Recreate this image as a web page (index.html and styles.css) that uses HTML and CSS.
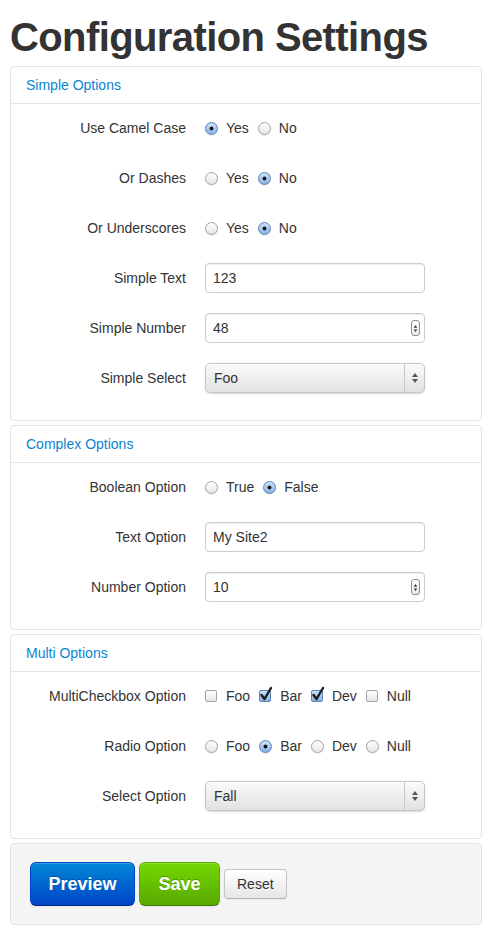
FILE: index.html
```html
<!DOCTYPE html>
<html>
<head>
<meta charset="utf-8">
<link rel="stylesheet" href="styles.css">
</head>
<body>
<h1 class="title">Configuration Settings</h1>

<section class="panel">
  <div class="panel-head">Simple Options</div>
  <div class="panel-body">
    <div class="row"><div class="lbl">Use Camel Case</div><div class="ctl"><label class="opt"><span class="radio on"></span>Yes</label><label class="opt"><span class="radio"></span>No</label></div></div>
    <div class="row"><div class="lbl">Or Dashes</div><div class="ctl"><label class="opt"><span class="radio"></span>Yes</label><label class="opt"><span class="radio on"></span>No</label></div></div>
    <div class="row"><div class="lbl">Or Underscores</div><div class="ctl"><label class="opt"><span class="radio"></span>Yes</label><label class="opt"><span class="radio on"></span>No</label></div></div>
    <div class="row"><div class="lbl">Simple Text</div><div class="ctl"><div class="field"><input class="input" type="text" value="123"></div></div></div>
    <div class="row"><div class="lbl">Simple Number</div><div class="ctl"><div class="field"><input class="input" type="text" value="48"><span class="spin"><svg width="8" height="15" viewBox="0 0 8 15"><path d="M4 3.5 L6 6.5 L2 6.5 Z M4 11.5 L6 8.5 L2 8.5 Z" fill="#333"/></svg></span></div></div></div>
    <div class="row"><div class="lbl">Simple Select</div><div class="ctl"><div class="select"><span class="select-text">Foo</span><span class="select-arrow"><svg width="8" height="12" viewBox="0 0 8 12"><path d="M4 1 L7 5 L1 5 Z M4 11 L7 7 L1 7 Z" fill="#555"/></svg></span></div></div></div>
  </div>
</section>

<section class="panel">
  <div class="panel-head">Complex Options</div>
  <div class="panel-body">
    <div class="row"><div class="lbl">Boolean Option</div><div class="ctl"><label class="opt"><span class="radio"></span>True</label><label class="opt"><span class="radio on"></span>False</label></div></div>
    <div class="row"><div class="lbl">Text Option</div><div class="ctl"><div class="field"><input class="input" type="text" value="My Site2"></div></div></div>
    <div class="row"><div class="lbl">Number Option</div><div class="ctl"><div class="field"><input class="input" type="text" value="10"><span class="spin"><svg width="8" height="15" viewBox="0 0 8 15"><path d="M4 3.5 L6 6.5 L2 6.5 Z M4 11.5 L6 8.5 L2 8.5 Z" fill="#333"/></svg></span></div></div></div>
  </div>
</section>

<section class="panel">
  <div class="panel-head">Multi Options</div>
  <div class="panel-body">
    <div class="row"><div class="lbl">MultiCheckbox Option</div><div class="ctl">
      <label class="opt"><span class="check"></span>Foo</label>
      <label class="opt"><span class="check on"><svg class="tick" width="14" height="16" viewBox="0 0 14 16"><path d="M2.5 9 L5.5 13 L12 2" fill="none" stroke="#1c1c1c" stroke-width="2.4" stroke-linecap="round" stroke-linejoin="round"/></svg></span>Bar</label>
      <label class="opt"><span class="check on"><svg class="tick" width="14" height="16" viewBox="0 0 14 16"><path d="M2.5 9 L5.5 13 L12 2" fill="none" stroke="#1c1c1c" stroke-width="2.4" stroke-linecap="round" stroke-linejoin="round"/></svg></span>Dev</label>
      <label class="opt"><span class="check"></span>Null</label>
    </div></div>
    <div class="row"><div class="lbl">Radio Option</div><div class="ctl">
      <label class="opt"><span class="radio"></span>Foo</label>
      <label class="opt"><span class="radio on"></span>Bar</label>
      <label class="opt"><span class="radio"></span>Dev</label>
      <label class="opt"><span class="radio"></span>Null</label>
    </div></div>
    <div class="row"><div class="lbl">Select Option</div><div class="ctl"><div class="select"><span class="select-text">Fall</span><span class="select-arrow"><svg width="8" height="12" viewBox="0 0 8 12"><path d="M4 1 L7 5 L1 5 Z M4 11 L7 7 L1 7 Z" fill="#555"/></svg></span></div></div></div>
  </div>
</section>

<div class="actions">
  <button class="btn btn-large btn-primary">Preview</button>
  <button class="btn btn-large btn-success">Save</button>
  <button class="btn">Reset</button>
</div>
</body>
</html>
```

FILE: styles.css
```css
* { box-sizing: border-box; }
html, body { margin: 0; background: #fff; }
body {
  padding: 0 11px 0 10px;
  font-family: "Liberation Sans", Arial, sans-serif;
  font-size: 14px;
  color: #333;
}
.title {
  margin: 13px 0 5px;
  font-size: 40px;
  line-height: 48px;
  letter-spacing: -0.6px;
  font-weight: bold;
  color: #333;
}
.panel {
  border: 1px solid #e3e3e3;
  border-radius: 4px;
  margin-bottom: 4px;
  background: #fff;
}
.panel-head {
  padding: 8px 15px;
  line-height: 20px;
  color: #0a84d0;
  border-bottom: 1px solid #e3e3e3;
}
.panel-body {
  padding: 9px 15px 27px;
}
.row {
  display: flex;
  align-items: center;
  height: 30px;
  margin-bottom: 20px;
}
.row:last-child { margin-bottom: 0; }
.lbl {
  width: 160px;
  flex: none;
  text-align: right;
}
.ctl {
  margin-left: 19px;
  display: flex;
  align-items: center;
}
.opt {
  display: inline-flex;
  align-items: center;
  margin-right: 9px;
  line-height: 20px;
}
.radio {
  display: inline-block;
  width: 13px;
  height: 13px;
  border-radius: 50%;
  border: 1px solid #a3a3a3;
  background: linear-gradient(#ffffff, #e6e6e6);
  box-shadow: 0 1px 1px rgba(0,0,0,0.08);
  margin-right: 8px;
}
.radio.on {
  border-color: #5b82b9;
  background:
    radial-gradient(circle at 50% 50%, #151515 0, #151515 1.6px, rgba(0,0,0,0) 2.3px),
    linear-gradient(#cfe1f7, #86b2e8);
}
.check {
  position: relative;
  display: inline-block;
  width: 12px;
  height: 12px;
  border-radius: 2px;
  border: 1px solid #a3a3a3;
  background: linear-gradient(#ffffff, #e6e6e6);
  margin-right: 9px;
}
.check.on {
  border-color: #5b82b9;
  background: linear-gradient(#cfe1f7, #86b2e8);
}
.tick {
  position: absolute;
  left: -1px;
  top: -5px;
}
.field {
  position: relative;
  width: 220px;
}
.input {
  display: block;
  width: 220px;
  height: 30px;
  padding: 4px 7px;
  border: 1px solid #cccccc;
  border-radius: 4px;
  box-shadow: inset 0 1px 1px rgba(0,0,0,0.075);
  font-family: "Liberation Sans", Arial, sans-serif;
  font-size: 14px;
  color: #333;
  background: #fff;
  outline: none;
}
.spin {
  position: absolute;
  right: 5px;
  top: 7px;
  width: 9px;
  height: 16px;
  border: 1px solid #8f8f8f;
  border-radius: 3px;
  background: linear-gradient(#ffffff, #e8e8e8);
  display: flex;
  align-items: center;
  justify-content: center;
}
.spin svg { display: block; }
.select {
  display: flex;
  width: 220px;
  height: 30px;
  border: 1px solid #c4c4c4;
  border-radius: 5px;
  background: linear-gradient(#fafafa, #e2e2e2);
  box-shadow: 0 1px 2px rgba(0,0,0,0.15), inset 0 1px 0 #fff;
}
.select-text {
  flex: 1;
  padding-left: 8px;
  line-height: 28px;
}
.select-arrow {
  width: 20px;
  border-left: 1px solid #c9c9c9;
  display: flex;
  align-items: center;
  justify-content: center;
}
.actions {
  background: #f4f4f4;
  border: 1px solid #e3e3e3;
  border-radius: 4px;
  padding: 18px 19px;
  display: flex;
  align-items: center;
  gap: 4px;
}
.btn {
  font-family: "Liberation Sans", Arial, sans-serif;
  font-size: 14px;
  height: 30px;
  padding: 0 12px;
  border: 1px solid #c5c5c5;
  border-bottom-color: #b3b3b3;
  border-radius: 4px;
  color: #333;
  background: linear-gradient(#ffffff, #e6e6e6);
  box-shadow: inset 0 1px 0 rgba(255,255,255,0.2), 0 1px 2px rgba(0,0,0,0.05);
}
.btn-large {
  height: 44px;
  font-size: 18px;
  font-weight: bold;
  color: #fff;
  border-radius: 6px;
  text-shadow: 0 -1px 0 rgba(0,0,0,0.25);
}
.btn-primary {
  width: 105px;
  background: linear-gradient(#0088d6, #0044c8);
  border-color: #0044cc #0044cc #002a80;
}
.btn-success {
  width: 81px;
  background: linear-gradient(#74d800, #58a800);
  border-color: #5aa800 #5aa800 #3f7a00;
}
```
